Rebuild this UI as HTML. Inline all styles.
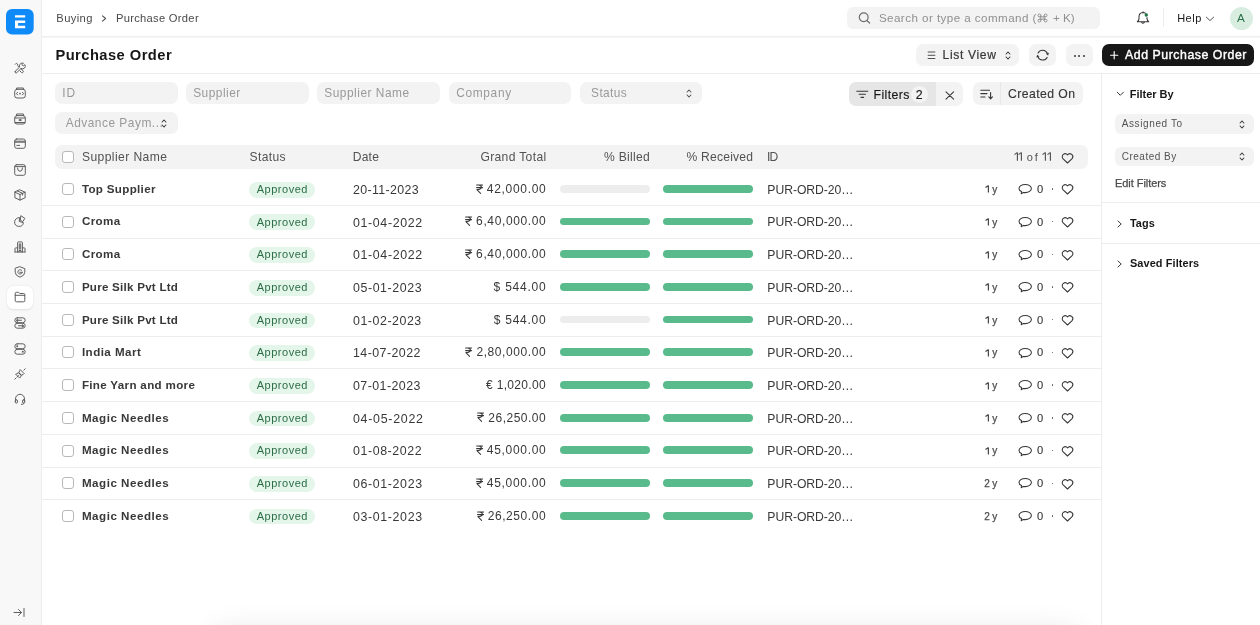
<!DOCTYPE html>
<html><head><meta charset="utf-8">
<style>
*{box-sizing:border-box;margin:0;padding:0}
html,body{width:1260px;height:625px;overflow:hidden;background:#fff;font-family:"Liberation Sans",sans-serif;color:#171717}
body{position:relative}
.a{position:absolute}
.t{position:absolute;white-space:nowrap;line-height:1}
svg.a{overflow:visible}
</style></head><body>
<div id="root" class="a" style="left:0;top:0;width:1260px;height:625px;overflow:hidden;will-change:transform">

<div class="a" style="left:0.00px;top:0.00px;width:41.00px;height:625.00px;background:#f8f8f8;border-radius:0px;"></div>
<div class="a" style="left:41.00px;top:0.00px;width:1.00px;height:625.00px;background:#ededed;border-radius:0px;"></div>
<svg class="a" style="left:6.00px;top:8.70px" width="27.7" height="25.5" viewBox="0 0 27.7 25.5" fill="none"><rect x="0" y="0" width="27.7" height="25.5" rx="6" fill="#0f8af9"/><path d="M9 6.2 H19.2 V8.4 H9 Z M9 11.5 H19.2 V13.9 H12.1 V16.8 H19.2 V19.2 H9 Z" fill="#fff"/></svg>
<div class="a" style="left:7.00px;top:285.80px;width:26.30px;height:23.00px;background:#fff;border-radius:6px;box-shadow:0 0.5px 2px rgba(0,0,0,0.10);"></div>
<svg class="a" style="left:14.00px;top:61.90px" width="12" height="12" viewBox="0 0 12 12" fill="none"><path d="M1.3 9.3 L5.6 5 A2.6 2.6 0 0 1 6.9 1.5 A2.7 2.7 0 0 1 9.4 1.2 L8 2.7 L9.3 4 L10.8 2.6 A2.7 2.7 0 0 1 7.1 6.4 L2.8 10.7 A1 1 0 0 1 1.3 9.3 Z" stroke="#5e5e5e" stroke-width="1.0" stroke-linecap="round" stroke-linejoin="round"/><path d="M1.3 2.3 L2.4 1.2 L3.6 2.2 L3.5 3.3 L5.2 5 M6.9 6.7 L9.2 9 A1.2 1.2 0 0 1 7.6 10.6 L6 9" stroke="#5e5e5e" stroke-width="1.0" stroke-linecap="round" stroke-linejoin="round"/></svg>
<svg class="a" style="left:14.00px;top:87.30px" width="12" height="12" viewBox="0 0 12 12" fill="none"><rect x="0.7" y="2.3" width="10.6" height="8.7" rx="2.3" stroke="#5e5e5e" stroke-width="1.0" stroke-linecap="round" stroke-linejoin="round"/><path d="M2.6 2.3 V1 H9.4 V2.3" stroke="#5e5e5e" stroke-width="1.0" stroke-linecap="round" stroke-linejoin="round"/><path d="M3.6 5.3 L2.4 6.6 L3.6 7.9 M8.4 5.3 L9.6 6.6 L8.4 7.9" stroke="#5e5e5e" stroke-width="1.0" stroke-linecap="round" stroke-linejoin="round"/><circle cx="6" cy="6.6" r="0.9" fill="#5e5e5e"/></svg>
<svg class="a" style="left:14.00px;top:113.10px" width="12" height="12" viewBox="0 0 12 12" fill="none"><rect x="0.7" y="2.6" width="10.6" height="8.4" rx="2.3" stroke="#5e5e5e" stroke-width="1.0" stroke-linecap="round" stroke-linejoin="round"/><path d="M2.6 2.6 V1 H9.4 V2.6 M0.9 5 H11.1 M0.9 9.5 H11.1" stroke="#5e5e5e" stroke-width="1.0" stroke-linecap="round" stroke-linejoin="round"/><ellipse cx="6" cy="7.1" rx="1.1" ry="0.65" stroke="#5e5e5e" stroke-width="1.0" stroke-linecap="round" stroke-linejoin="round"/></svg>
<svg class="a" style="left:14.00px;top:138.10px" width="12" height="12" viewBox="0 0 12 12" fill="none"><rect x="0.7" y="1" width="10.6" height="9.3" rx="2" stroke="#5e5e5e" stroke-width="1.0" stroke-linecap="round" stroke-linejoin="round"/><path d="M0.8 3.2 H11.2 M0.8 4.2 H11.2 M2.8 7.4 H5.6" stroke="#5e5e5e" stroke-width="1.0" stroke-linecap="round" stroke-linejoin="round"/></svg>
<svg class="a" style="left:14.00px;top:163.80px" width="12" height="12" viewBox="0 0 12 12" fill="none"><rect x="0.7" y="0.7" width="10.6" height="10.6" rx="1.8" stroke="#5e5e5e" stroke-width="1.0" stroke-linecap="round" stroke-linejoin="round"/><path d="M0.9 2.6 H11.1 M3.5 4 Q3.5 7.3 6 7.3 Q8.5 7.3 8.5 4" stroke="#5e5e5e" stroke-width="1.0" stroke-linecap="round" stroke-linejoin="round"/></svg>
<svg class="a" style="left:14.00px;top:189.00px" width="12" height="12" viewBox="0 0 12 12" fill="none"><path d="M6 0.9 L11.1 3.2 V8.8 L6 11.1 L0.9 8.8 V3.2 Z M0.9 3.2 L6 5.5 L11.1 3.2 M6 5.5 V11.1 M3.4 2 L8.6 4.3 V6" stroke="#5e5e5e" stroke-width="1.0" stroke-linecap="round" stroke-linejoin="round"/></svg>
<svg class="a" style="left:14.00px;top:214.70px" width="12" height="12" viewBox="0 0 12 12" fill="none"><path d="M5.2 2.6 A4.4 4.4 0 1 0 9.4 7.6 L5.6 6.6 Z" stroke="#5e5e5e" stroke-width="1.0" stroke-linecap="round" stroke-linejoin="round"/><path d="M7.2 0.9 L10.9 3.4 L8.7 6.6 L6.6 5.4 Z" stroke="#5e5e5e" stroke-width="1.0" stroke-linecap="round" stroke-linejoin="round"/></svg>
<svg class="a" style="left:14.00px;top:240.50px" width="12" height="12" viewBox="0 0 12 12" fill="none"><path d="M3.6 11 V1.6 Q3.6 0.9 4.3 0.9 H7.7 Q8.4 0.9 8.4 1.6 V11 M1 11 H11 M1 11 V7.6 Q1 6.9 1.7 6.9 H3.6 M11 11 V7.6 Q11 6.9 10.3 6.9 H8.4 M5.3 2.8 V8.2 M6.7 2.8 V8.2 M5 11 V9.5 H7 V11" stroke="#5e5e5e" stroke-width="1.0" stroke-linecap="round" stroke-linejoin="round"/></svg>
<svg class="a" style="left:14.00px;top:266.00px" width="12" height="12" viewBox="0 0 12 12" fill="none"><path d="M6 0.8 L10.8 2.6 V6.2 Q10.8 9.6 6 11.2 Q1.2 9.6 1.2 6.2 V2.6 Z" stroke="#5e5e5e" stroke-width="1.0" stroke-linecap="round" stroke-linejoin="round"/><path d="M7.9 4.6 A2.2 2.2 0 1 0 8.2 6.6 M8.2 6.3 L5.9 6.3" stroke="#5e5e5e" stroke-width="1.0" stroke-linecap="round" stroke-linejoin="round"/></svg>
<svg class="a" style="left:14.00px;top:291.30px" width="12" height="12" viewBox="0 0 12 12" fill="none"><path d="M1.2 2.5 Q1.2 1.3 2.3 1.3 H4.6 L5.8 2.5 H9.6 Q10.8 2.5 10.8 3.7 V9.6 Q10.8 10.8 9.6 10.8 H2.4 Q1.2 10.8 1.2 9.6 Z M1.2 4.3 H10.8" stroke="#5e5e5e" stroke-width="1.0" stroke-linecap="round" stroke-linejoin="round"/></svg>
<svg class="a" style="left:14.00px;top:316.80px" width="12" height="12" viewBox="0 0 12 12" fill="none"><rect x="0.8" y="0.8" width="10.4" height="4.9" rx="2.45" stroke="#5e5e5e" stroke-width="1.0" stroke-linecap="round" stroke-linejoin="round"/><rect x="0.8" y="6.3" width="10.4" height="4.9" rx="2.45" stroke="#5e5e5e" stroke-width="1.0" stroke-linecap="round" stroke-linejoin="round"/><path d="M2.4 3.25 L3.6 2.2 V4.3 Z M9.6 8.75 L8.4 7.7 V9.8 Z M4 3.25 H7.5 M4.5 8.75 H8" stroke="#5e5e5e" stroke-width="1.0" stroke-linecap="round" stroke-linejoin="round"/></svg>
<svg class="a" style="left:14.00px;top:343.00px" width="12" height="12" viewBox="0 0 12 12" fill="none"><rect x="0.8" y="0.8" width="10.4" height="4.9" rx="2.45" stroke="#5e5e5e" stroke-width="1.0" stroke-linecap="round" stroke-linejoin="round"/><rect x="0.8" y="6.3" width="10.4" height="4.9" rx="2.45" stroke="#5e5e5e" stroke-width="1.0" stroke-linecap="round" stroke-linejoin="round"/><circle cx="3.2" cy="3.25" r="1" fill="#5e5e5e"/><circle cx="8.8" cy="8.75" r="1" fill="#5e5e5e"/></svg>
<svg class="a" style="left:14.00px;top:367.60px" width="12" height="12" viewBox="0 0 12 12" fill="none"><path d="M0.8 11.2 L2.2 9.8 M11.2 0.8 L9.8 2.2 M1.9 6.4 L5.6 10.1 L6.3 9.4 A2.6 2.6 0 0 0 2.6 5.7 Z M6.4 1.9 L10.1 5.6 L9.4 6.3 A2.6 2.6 0 0 1 5.7 2.6 Z M3.2 8.8 L4.4 7.6" stroke="#5e5e5e" stroke-width="1.0" stroke-linecap="round" stroke-linejoin="round"/></svg>
<svg class="a" style="left:14.00px;top:393.20px" width="12" height="12" viewBox="0 0 12 12" fill="none"><path d="M1.5 8.2 V5.8 A4.5 4.5 0 0 1 10.5 5.8 V8.2" stroke="#5e5e5e" stroke-width="1.0" stroke-linecap="round" stroke-linejoin="round"/><rect x="1.2" y="6.8" width="2.3" height="3.3" rx="1.15" stroke="#5e5e5e" stroke-width="1.0" stroke-linecap="round" stroke-linejoin="round"/><rect x="8.5" y="6.8" width="2.3" height="3.3" rx="1.15" stroke="#5e5e5e" stroke-width="1.0" stroke-linecap="round" stroke-linejoin="round"/><path d="M9.6 10.1 V10.4 Q9.6 11.3 8.7 11.3 H7.4" stroke="#5e5e5e" stroke-width="1.0" stroke-linecap="round" stroke-linejoin="round"/></svg>
<svg class="a" style="left:13.00px;top:607.00px" width="12" height="11" viewBox="0 0 12 11" fill="none"><path d="M1 5.5 H8.5 M5.5 2.5 L8.5 5.5 L5.5 8.5 M11 1.5 V9.5" stroke="#5e5e5e" stroke-width="1.0" stroke-linecap="round" stroke-linejoin="round"/></svg>
<div class="a" style="left:42.00px;top:36.00px;width:1218.00px;height:1.00px;background:#efefef;border-radius:0px;"></div>
<div class="a" style="left:42.00px;top:37.00px;width:1218.00px;height:1.00px;background:#f7f7f7;border-radius:0px;"></div>
<div class="t" style="left:56.30px;top:13.00px;font-size:11.2px;color:#4a4a4a;letter-spacing:0.370px;">Buying</div>
<svg class="a" style="left:101.00px;top:15.00px" width="7" height="7" viewBox="0 0 7 7" fill="none"><path d="M1.5 0.8 L4.6 3.5 L1.5 6.2" stroke="#525252" stroke-width="1.1" stroke-linecap="round" stroke-linejoin="round"/></svg>
<div class="t" style="left:115.90px;top:13.00px;font-size:11.2px;color:#4a4a4a;letter-spacing:0.288px;">Purchase Order</div>
<div class="a" style="left:847.00px;top:7.00px;width:253.00px;height:22.00px;background:#f3f3f3;border-radius:6px;"></div>
<svg class="a" style="left:858.00px;top:12.00px" width="13" height="12" viewBox="0 0 13 12" fill="none"><circle cx="5.7" cy="5.3" r="4.4" stroke="#6b6b6b" stroke-width="1.2"/><path d="M8.9 8.5 L11.6 11" stroke="#6b6b6b" stroke-width="1.2" stroke-linecap="round"/></svg>
<div class="t" style="left:878.90px;top:12.00px;font-size:11.6px;color:#8f8f8f;letter-spacing:0.450px;">Search or type a command (</div>
<svg class="a" style="left:1038.30px;top:14.00px" width="9" height="8" viewBox="0 0 9 8" fill="none"><path d="M2.8 1.4 V6.6 M6.2 1.4 V6.6 M1.4 2.8 H7.6 M1.4 5.2 H7.6" stroke="#8f8f8f" stroke-width="0.95"/><circle cx="1.4" cy="1.4" r="1.4" stroke="#8f8f8f" stroke-width="0.95"/><circle cx="7.6" cy="1.4" r="1.4" stroke="#8f8f8f" stroke-width="0.95"/><circle cx="1.4" cy="6.6" r="1.4" stroke="#8f8f8f" stroke-width="0.95"/><circle cx="7.6" cy="6.6" r="1.4" stroke="#8f8f8f" stroke-width="0.95"/></svg>
<div class="t" style="left:1053.00px;top:12.00px;font-size:11.6px;color:#8f8f8f;">+ K)</div>
<svg class="a" style="left:1136.00px;top:11.00px" width="14" height="15" viewBox="0 0 14 15" fill="none"><path d="M9.6 2.3 Q8.6 1.4 7 1.4 Q3 1.6 3 5.8 V7.6 Q2.9 9.6 1.3 10.7 H12.7 Q11.1 9.6 11 7.6 V6.4" stroke="#383838" stroke-width="1.05" stroke-linejoin="round" stroke-linecap="round"/><path d="M5.7 11.4 Q7 13.2 8.3 11.4" stroke="#383838" stroke-width="1.05" stroke-linecap="round"/><path d="M7 1.4 V0.7" stroke="#383838" stroke-width="1.05" stroke-linecap="round"/><circle cx="10.3" cy="4" r="1.7" fill="#1f7a48"/></svg>
<div class="a" style="left:1163.00px;top:8.20px;width:1.00px;height:18.90px;background:#ededed;border-radius:0px;"></div>
<div class="t" style="left:1177.20px;top:13.00px;font-size:11px;color:#171717;letter-spacing:0.491px;">Help</div>
<svg class="a" style="left:1205.00px;top:16.00px" width="10" height="6" viewBox="0 0 10 6" fill="none"><path d="M1.4 1.2 L5 4.6 L8.6 1.2" stroke="#525252" stroke-width="1" stroke-linecap="round" stroke-linejoin="round"/></svg>
<div class="a" style="left:1229.50px;top:6.50px;width:23.00px;height:23.00px;background:#d8ede0;border-radius:12px;"></div>
<div class="t" style="left:1236.90px;top:12.00px;font-size:11.7px;color:#2a7048;">A</div>
<div class="a" style="left:42.00px;top:73.00px;width:1059.00px;height:1.00px;background:#ededed;border-radius:0px;"></div>
<div class="a" style="left:1101.00px;top:73.00px;width:159.00px;height:1.00px;background:#ededed;border-radius:0px;"></div>
<div class="t" style="left:55.40px;top:48.00px;font-size:14.7px;color:#171717;font-weight:bold;letter-spacing:0.462px;">Purchase Order</div>
<div class="a" style="left:916.00px;top:44.00px;width:103.00px;height:22.00px;background:#f3f3f3;border-radius:7px;"></div>
<svg class="a" style="left:927.00px;top:51.00px" width="9" height="8" viewBox="0 0 9 8" fill="none"><path d="M0.7 1 H8.3 M0.7 4.3 H8.3 M0.7 7.5 H8.3" stroke="#525252" stroke-width="1"/></svg>
<div class="t" style="left:942.50px;top:49.00px;font-size:12.1px;color:#383838;letter-spacing:0.659px;-webkit-text-stroke:0.2px #383838;">List View</div>
<svg class="a" style="left:1005.00px;top:51.00px" width="6" height="9" viewBox="0 0 6 9" fill="none"><path d="M1.1 3 L3 1 L4.9 3 M1.1 6 L3 8 L4.9 6" stroke="#383838" stroke-width="1.05" stroke-linecap="round" stroke-linejoin="round"/></svg>
<div class="a" style="left:1029.00px;top:44.00px;width:27.00px;height:22.00px;background:#f3f3f3;border-radius:7px;"></div>
<svg class="a" style="left:1035.00px;top:48.00px" width="15" height="14" viewBox="0 0 15 14" fill="none"><path d="M3.1 4.9 A5 4.6 0 0 1 12.3 5.3" stroke="#383838" stroke-width="1.15" stroke-linecap="round"/><path d="M10.8 5.7 L14 4.7 L13.1 7.5 Z" fill="#383838"/><path d="M12.1 9.4 A5 4.6 0 0 1 2.9 8.9" stroke="#383838" stroke-width="1.15" stroke-linecap="round"/><path d="M4.5 8.5 L1.3 9.5 L2.2 6.7 Z" fill="#383838"/></svg>
<div class="a" style="left:1065.50px;top:44.00px;width:27.50px;height:22.00px;background:#f3f3f3;border-radius:7px;"></div>
<div class="a" style="left:1074.00px;top:54.50px;width:2.00px;height:2.00px;background:#383838;border-radius:1px;"></div>
<div class="a" style="left:1078.30px;top:54.50px;width:2.00px;height:2.00px;background:#383838;border-radius:1px;"></div>
<div class="a" style="left:1082.50px;top:54.50px;width:2.00px;height:2.00px;background:#383838;border-radius:1px;"></div>
<div class="a" style="left:1102.00px;top:44.00px;width:152.00px;height:22.40px;background:#171717;border-radius:7px;"></div>
<svg class="a" style="left:1110.00px;top:50.80px" width="9" height="9" viewBox="0 0 9 9" fill="none"><path d="M4.2 0.6 V7.8 M0.6 4.2 H7.8" stroke="#fff" stroke-width="1.15" stroke-linecap="round"/></svg>
<div class="t" style="left:1125.10px;top:49.00px;font-size:12.3px;color:#fff;letter-spacing:0.545px;-webkit-text-stroke:0.4px #fff;">Add Purchase Order</div>
<div class="a" style="left:1101.00px;top:74.00px;width:1.00px;height:551.00px;background:#ededed;border-radius:0px;"></div>
<div class="a" style="left:55.00px;top:82.00px;width:123.00px;height:22.00px;background:#f3f3f3;border-radius:7px;"></div>
<div class="t" style="left:62.20px;top:88.00px;font-size:11.9px;color:#999;letter-spacing:0.950px;">ID</div>
<div class="a" style="left:186.00px;top:82.00px;width:123.00px;height:22.00px;background:#f3f3f3;border-radius:7px;"></div>
<div class="t" style="left:193.20px;top:88.00px;font-size:11.9px;color:#999;letter-spacing:0.498px;">Supplier</div>
<div class="a" style="left:317.00px;top:82.00px;width:123.00px;height:22.00px;background:#f3f3f3;border-radius:7px;"></div>
<div class="t" style="left:324.20px;top:88.00px;font-size:11.9px;color:#999;letter-spacing:0.524px;">Supplier Name</div>
<div class="a" style="left:449.00px;top:82.00px;width:122.00px;height:22.00px;background:#f3f3f3;border-radius:7px;"></div>
<div class="t" style="left:456.20px;top:88.00px;font-size:11.9px;color:#999;letter-spacing:0.678px;">Company</div>
<div class="a" style="left:580.00px;top:82.00px;width:122.00px;height:22.00px;background:#f3f3f3;border-radius:7px;"></div>
<div class="t" style="left:591.10px;top:88.00px;font-size:11.9px;color:#999;letter-spacing:0.373px;">Status</div>
<svg class="a" style="left:686.00px;top:89.00px" width="6" height="9" viewBox="0 0 6 9" fill="none"><path d="M1.1 3 L3 1 L4.9 3 M1.1 6 L3 8 L4.9 6" stroke="#525252" stroke-width="1.05" stroke-linecap="round" stroke-linejoin="round"/></svg>
<div class="a" style="left:55.00px;top:112.00px;width:123.00px;height:22.00px;background:#f3f3f3;border-radius:7px;"></div>
<div class="t" style="left:65.70px;top:118.00px;font-size:11.9px;color:#999;letter-spacing:0.513px;">Advance Paym...</div>
<svg class="a" style="left:160.50px;top:119.00px" width="6" height="9" viewBox="0 0 6 9" fill="none"><path d="M1.1 3 L3 1 L4.9 3 M1.1 6 L3 8 L4.9 6" stroke="#383838" stroke-width="1.05" stroke-linecap="round" stroke-linejoin="round"/></svg>
<div class="a" style="left:849.00px;top:82.00px;width:114.00px;height:23.50px;background:#f3f3f3;border-radius:7px;"></div>
<div class="a" style="left:849.00px;top:82.00px;width:86.60px;height:23.50px;background:#e6e6e6;border-radius:0px;border-radius:7px 0 0 7px;"></div>
<svg class="a" style="left:856.00px;top:90.00px" width="13" height="9" viewBox="0 0 13 9" fill="none"><path d="M0.8 1.2 H11.8 M3.2 4.3 H9.4 M5 7.4 H7.6" stroke="#383838" stroke-width="1.1" stroke-linecap="round"/></svg>
<div class="t" style="left:873.50px;top:89.00px;font-size:12.3px;color:#171717;letter-spacing:0.403px;-webkit-text-stroke:0.15px #171717;">Filters</div>
<div class="a" style="left:911.30px;top:86.00px;width:17.20px;height:17.20px;background:#f3f3f3;border-radius:9px;"></div>
<div class="t" style="left:915.80px;top:89.00px;font-size:12.3px;color:#171717;-webkit-text-stroke:0.15px #171717;">2</div>
<svg class="a" style="left:945.00px;top:91.00px" width="10" height="9" viewBox="0 0 10 9" fill="none"><path d="M1 0.8 L8.6 8.2 M8.6 0.8 L1 8.2" stroke="#383838" stroke-width="1.05" stroke-linecap="round"/></svg>
<div class="a" style="left:972.80px;top:82.00px;width:110.40px;height:23.20px;background:#f3f3f3;border-radius:7px;"></div>
<div class="a" style="left:1000.00px;top:82.00px;width:1.00px;height:23.20px;background:#e8e8e8;border-radius:0px;"></div>
<svg class="a" style="left:980.00px;top:89.00px" width="14" height="11" viewBox="0 0 14 11" fill="none"><path d="M0.8 1.2 H9.5 M0.8 4.6 H7 M0.8 8 H5" stroke="#383838" stroke-width="1.1" stroke-linecap="round"/><path d="M10.6 3.6 V9.6 M8.8 7.8 L10.6 9.8 L12.4 7.8" stroke="#383838" stroke-width="1.1" stroke-linecap="round" stroke-linejoin="round"/></svg>
<div class="t" style="left:1008.00px;top:88.00px;font-size:12.2px;color:#383838;letter-spacing:0.449px;-webkit-text-stroke:0.15px #383838;">Created On</div>
<div class="a" style="left:55.00px;top:145.00px;width:1033.00px;height:24.00px;background:#f3f3f3;border-radius:7px;"></div>
<div class="a" style="left:62.00px;top:151.40px;width:12.00px;height:12.00px;background:#fff;border-radius:3px;border:1px solid #b8b8b8;"></div>
<div class="t" style="left:81.90px;top:151.00px;font-size:12.1px;color:#525252;letter-spacing:0.423px;">Supplier Name</div>
<div class="t" style="left:249.50px;top:151.00px;font-size:12.1px;color:#525252;letter-spacing:0.359px;">Status</div>
<div class="t" style="left:352.70px;top:151.00px;font-size:12.1px;color:#525252;letter-spacing:0.215px;">Date</div>
<div class="t" style="left:480.40px;top:151.00px;font-size:12.1px;color:#525252;letter-spacing:0.347px;">Grand Total</div>
<div class="t" style="left:604.10px;top:151.00px;font-size:12.1px;color:#525252;letter-spacing:0.283px;">% Billed</div>
<div class="t" style="left:686.40px;top:151.00px;font-size:12.1px;color:#525252;letter-spacing:0.237px;">% Received</div>
<div class="t" style="left:766.90px;top:151.00px;font-size:12.1px;color:#525252;letter-spacing:-0.700px;">ID</div>
<svg class="a" style="left:1013.50px;top:152.30px" width="4.5" height="9.199999999999989" viewBox="0 0 4.5 9.199999999999989" fill="none"><path d="M0.5 2.6 L2.8 0.9 H3.4 V8.70" stroke="#525252" stroke-width="1.15" stroke-linejoin="round"/></svg>
<svg class="a" style="left:1018.30px;top:152.30px" width="4.5" height="9.199999999999989" viewBox="0 0 4.5 9.199999999999989" fill="none"><path d="M0.5 2.6 L2.8 0.9 H3.4 V8.70" stroke="#525252" stroke-width="1.15" stroke-linejoin="round"/></svg>
<div class="t" style="left:1026.80px;top:152.00px;font-size:11px;color:#525252;letter-spacing:1.804px;">of</div>
<svg class="a" style="left:1042.10px;top:152.30px" width="4.5" height="9.199999999999989" viewBox="0 0 4.5 9.199999999999989" fill="none"><path d="M0.5 2.6 L2.8 0.9 H3.4 V8.70" stroke="#525252" stroke-width="1.15" stroke-linejoin="round"/></svg>
<svg class="a" style="left:1046.90px;top:152.30px" width="4.5" height="9.199999999999989" viewBox="0 0 4.5 9.199999999999989" fill="none"><path d="M0.5 2.6 L2.8 0.9 H3.4 V8.70" stroke="#525252" stroke-width="1.15" stroke-linejoin="round"/></svg>
<svg class="a" style="left:1061.20px;top:152.50px" width="13" height="11" viewBox="0 0 13 11" fill="none"><path d="M6.5 10 L1.9 5.6 A2.7 2.7 0 0 1 6.5 1.9 A2.7 2.7 0 0 1 11.1 5.6 Z" stroke="#383838" stroke-width="1.05" stroke-linejoin="round"/></svg>
<div class="a" style="left:62.00px;top:183.00px;width:12.00px;height:12.00px;background:#fff;border-radius:3px;border:1px solid #b8b8b8;"></div>
<div class="t" style="left:81.90px;top:183.00px;font-size:11.6px;color:#383838;font-weight:bold;letter-spacing:0.325px;">Top Supplier</div>
<div class="a" style="left:249.00px;top:181.80px;width:65.80px;height:15.80px;background:#e4f5e9;border-radius:8px;"></div>
<div class="t" style="left:256.70px;top:184.00px;font-size:11px;color:#2b6d47;letter-spacing:0.530px;">Approved</div>
<div class="t" style="left:353.00px;top:184.00px;font-size:12.4px;color:#383838;letter-spacing:0.355px;">20-11-2023</div>
<div class="t" style="left:486.80px;top:183.00px;font-size:12px;color:#383838;letter-spacing:0.689px;">42,000.00</div>
<svg class="a" style="left:475.80px;top:183.60px" width="8" height="10" viewBox="0 0 8 10" fill="none"><path d="M0.6 1 H6.6 M0.6 3.6 H6.6 M2.4 1 Q5.4 1 5.4 3.2 Q5.4 5.4 0.9 5.6 L4.6 9.4" stroke="#383838" stroke-width="1.05" stroke-linejoin="round" stroke-linecap="round"/></svg>
<div class="a" style="left:560.10px;top:184.90px;width:89.90px;height:7.80px;background:#ededed;border-radius:4px;"></div>
<div class="a" style="left:663.10px;top:184.90px;width:90.30px;height:7.80px;background:#59ba8b;border-radius:4px;"></div>
<div class="t" style="left:767.30px;top:184.00px;font-size:12.2px;color:#383838;letter-spacing:-0.047px;">PUR-ORD-20…</div>
<svg class="a" style="left:984.50px;top:185.40px" width="4.5" height="8.0" viewBox="0 0 4.5 8.0" fill="none"><path d="M0.5 2.6 L2.8 0.9 H3.4 V7.50" stroke="#4a4a4a" stroke-width="1.25" stroke-linejoin="round"/></svg>
<div class="t" style="left:992.20px;top:185.00px;font-size:10px;color:#4a4a4a;-webkit-text-stroke:0.25px #4a4a4a;">y</div>
<svg class="a" style="left:1017.50px;top:183.20px" width="15" height="12" viewBox="0 0 15 12" fill="none"><path d="M3.2 10.8 L3.6 8.6 C1.9 7.9 1 6.8 1 5.5 C1 3.2 3.7 1.4 7.2 1.4 C10.6 1.4 13.4 3.2 13.4 5.5 C13.4 7.8 10.6 9.6 7.2 9.6 C6.5 9.6 5.9 9.6 5.3 9.4 Z" stroke="#383838" stroke-width="1.05" stroke-linejoin="round"/></svg>
<div class="t" style="left:1037.00px;top:184.00px;font-size:11.2px;color:#383838;-webkit-text-stroke:0.12px #383838;">0</div>
<div class="a" style="left:1051.60px;top:188.30px;width:1.40px;height:1.40px;background:#525252;border-radius:1px;"></div>
<svg class="a" style="left:1061.30px;top:184.40px" width="13" height="11" viewBox="0 0 13 11" fill="none"><path d="M6.5 10 L1.9 5.6 A2.7 2.7 0 0 1 6.5 1.9 A2.7 2.7 0 0 1 11.1 5.6 Z" stroke="#383838" stroke-width="1.05" stroke-linejoin="round"/></svg>
<div class="a" style="left:42.00px;top:205.00px;width:1059.00px;height:1.00px;background:#ededed;border-radius:0px;"></div>
<div class="a" style="left:62.00px;top:215.69px;width:12.00px;height:12.00px;background:#fff;border-radius:3px;border:1px solid #b8b8b8;"></div>
<div class="t" style="left:81.90px;top:215.00px;font-size:11.6px;color:#383838;font-weight:bold;letter-spacing:0.395px;">Croma</div>
<div class="a" style="left:249.00px;top:214.49px;width:65.80px;height:15.80px;background:#e4f5e9;border-radius:8px;"></div>
<div class="t" style="left:256.70px;top:217.00px;font-size:11px;color:#2b6d47;letter-spacing:0.530px;">Approved</div>
<div class="t" style="left:353.00px;top:217.00px;font-size:12.4px;color:#383838;letter-spacing:0.642px;">01-04-2022</div>
<div class="t" style="left:476.10px;top:215.00px;font-size:12px;color:#383838;letter-spacing:0.620px;">6,40,000.00</div>
<svg class="a" style="left:465.10px;top:216.29px" width="8" height="10" viewBox="0 0 8 10" fill="none"><path d="M0.6 1 H6.6 M0.6 3.6 H6.6 M2.4 1 Q5.4 1 5.4 3.2 Q5.4 5.4 0.9 5.6 L4.6 9.4" stroke="#383838" stroke-width="1.05" stroke-linejoin="round" stroke-linecap="round"/></svg>
<div class="a" style="left:560.10px;top:217.59px;width:89.90px;height:7.80px;background:#59ba8b;border-radius:4px;"></div>
<div class="a" style="left:663.10px;top:217.59px;width:90.30px;height:7.80px;background:#59ba8b;border-radius:4px;"></div>
<div class="t" style="left:767.30px;top:216.00px;font-size:12.2px;color:#383838;letter-spacing:-0.047px;">PUR-ORD-20…</div>
<svg class="a" style="left:984.50px;top:218.09px" width="4.5" height="8.0" viewBox="0 0 4.5 8.0" fill="none"><path d="M0.5 2.6 L2.8 0.9 H3.4 V7.50" stroke="#4a4a4a" stroke-width="1.25" stroke-linejoin="round"/></svg>
<div class="t" style="left:992.20px;top:218.00px;font-size:10px;color:#4a4a4a;-webkit-text-stroke:0.25px #4a4a4a;">y</div>
<svg class="a" style="left:1017.50px;top:215.89px" width="15" height="12" viewBox="0 0 15 12" fill="none"><path d="M3.2 10.8 L3.6 8.6 C1.9 7.9 1 6.8 1 5.5 C1 3.2 3.7 1.4 7.2 1.4 C10.6 1.4 13.4 3.2 13.4 5.5 C13.4 7.8 10.6 9.6 7.2 9.6 C6.5 9.6 5.9 9.6 5.3 9.4 Z" stroke="#383838" stroke-width="1.05" stroke-linejoin="round"/></svg>
<div class="t" style="left:1037.00px;top:217.00px;font-size:11.2px;color:#383838;-webkit-text-stroke:0.12px #383838;">0</div>
<div class="a" style="left:1051.60px;top:220.99px;width:1.40px;height:1.40px;background:#525252;border-radius:1px;"></div>
<svg class="a" style="left:1061.30px;top:217.09px" width="13" height="11" viewBox="0 0 13 11" fill="none"><path d="M6.5 10 L1.9 5.6 A2.7 2.7 0 0 1 6.5 1.9 A2.7 2.7 0 0 1 11.1 5.6 Z" stroke="#383838" stroke-width="1.05" stroke-linejoin="round"/></svg>
<div class="a" style="left:42.00px;top:237.69px;width:1059.00px;height:1.00px;background:#ededed;border-radius:0px;"></div>
<div class="a" style="left:62.00px;top:248.38px;width:12.00px;height:12.00px;background:#fff;border-radius:3px;border:1px solid #b8b8b8;"></div>
<div class="t" style="left:81.90px;top:248.00px;font-size:11.6px;color:#383838;font-weight:bold;letter-spacing:0.395px;">Croma</div>
<div class="a" style="left:249.00px;top:247.18px;width:65.80px;height:15.80px;background:#e4f5e9;border-radius:8px;"></div>
<div class="t" style="left:256.70px;top:249.00px;font-size:11px;color:#2b6d47;letter-spacing:0.530px;">Approved</div>
<div class="t" style="left:353.00px;top:249.00px;font-size:12.4px;color:#383838;letter-spacing:0.642px;">01-04-2022</div>
<div class="t" style="left:476.10px;top:248.00px;font-size:12px;color:#383838;letter-spacing:0.620px;">6,40,000.00</div>
<svg class="a" style="left:465.10px;top:248.98px" width="8" height="10" viewBox="0 0 8 10" fill="none"><path d="M0.6 1 H6.6 M0.6 3.6 H6.6 M2.4 1 Q5.4 1 5.4 3.2 Q5.4 5.4 0.9 5.6 L4.6 9.4" stroke="#383838" stroke-width="1.05" stroke-linejoin="round" stroke-linecap="round"/></svg>
<div class="a" style="left:560.10px;top:250.28px;width:89.90px;height:7.80px;background:#59ba8b;border-radius:4px;"></div>
<div class="a" style="left:663.10px;top:250.28px;width:90.30px;height:7.80px;background:#59ba8b;border-radius:4px;"></div>
<div class="t" style="left:767.30px;top:249.00px;font-size:12.2px;color:#383838;letter-spacing:-0.047px;">PUR-ORD-20…</div>
<svg class="a" style="left:984.50px;top:250.78px" width="4.5" height="7.999999999999972" viewBox="0 0 4.5 7.999999999999972" fill="none"><path d="M0.5 2.6 L2.8 0.9 H3.4 V7.50" stroke="#4a4a4a" stroke-width="1.25" stroke-linejoin="round"/></svg>
<div class="t" style="left:992.20px;top:250.00px;font-size:10px;color:#4a4a4a;-webkit-text-stroke:0.25px #4a4a4a;">y</div>
<svg class="a" style="left:1017.50px;top:248.58px" width="15" height="12" viewBox="0 0 15 12" fill="none"><path d="M3.2 10.8 L3.6 8.6 C1.9 7.9 1 6.8 1 5.5 C1 3.2 3.7 1.4 7.2 1.4 C10.6 1.4 13.4 3.2 13.4 5.5 C13.4 7.8 10.6 9.6 7.2 9.6 C6.5 9.6 5.9 9.6 5.3 9.4 Z" stroke="#383838" stroke-width="1.05" stroke-linejoin="round"/></svg>
<div class="t" style="left:1037.00px;top:249.00px;font-size:11.2px;color:#383838;-webkit-text-stroke:0.12px #383838;">0</div>
<div class="a" style="left:1051.60px;top:253.68px;width:1.40px;height:1.40px;background:#525252;border-radius:1px;"></div>
<svg class="a" style="left:1061.30px;top:249.78px" width="13" height="11" viewBox="0 0 13 11" fill="none"><path d="M6.5 10 L1.9 5.6 A2.7 2.7 0 0 1 6.5 1.9 A2.7 2.7 0 0 1 11.1 5.6 Z" stroke="#383838" stroke-width="1.05" stroke-linejoin="round"/></svg>
<div class="a" style="left:42.00px;top:270.38px;width:1059.00px;height:1.00px;background:#ededed;border-radius:0px;"></div>
<div class="a" style="left:62.00px;top:281.07px;width:12.00px;height:12.00px;background:#fff;border-radius:3px;border:1px solid #b8b8b8;"></div>
<div class="t" style="left:81.90px;top:281.00px;font-size:11.6px;color:#383838;font-weight:bold;letter-spacing:0.245px;">Pure Silk Pvt Ltd</div>
<div class="a" style="left:249.00px;top:279.87px;width:65.80px;height:15.80px;background:#e4f5e9;border-radius:8px;"></div>
<div class="t" style="left:256.70px;top:282.00px;font-size:11px;color:#2b6d47;letter-spacing:0.530px;">Approved</div>
<div class="t" style="left:353.00px;top:282.00px;font-size:12.4px;color:#383838;letter-spacing:0.575px;">05-01-2023</div>
<div class="t" style="left:493.60px;top:281.00px;font-size:12px;color:#383838;letter-spacing:0.769px;">$ 544.00</div>
<div class="a" style="left:560.10px;top:282.97px;width:89.90px;height:7.80px;background:#59ba8b;border-radius:4px;"></div>
<div class="a" style="left:663.10px;top:282.97px;width:90.30px;height:7.80px;background:#59ba8b;border-radius:4px;"></div>
<div class="t" style="left:767.30px;top:282.00px;font-size:12.2px;color:#383838;letter-spacing:-0.047px;">PUR-ORD-20…</div>
<svg class="a" style="left:984.50px;top:283.47px" width="4.5" height="8.0" viewBox="0 0 4.5 8.0" fill="none"><path d="M0.5 2.6 L2.8 0.9 H3.4 V7.50" stroke="#4a4a4a" stroke-width="1.25" stroke-linejoin="round"/></svg>
<div class="t" style="left:992.20px;top:283.00px;font-size:10px;color:#4a4a4a;-webkit-text-stroke:0.25px #4a4a4a;">y</div>
<svg class="a" style="left:1017.50px;top:281.27px" width="15" height="12" viewBox="0 0 15 12" fill="none"><path d="M3.2 10.8 L3.6 8.6 C1.9 7.9 1 6.8 1 5.5 C1 3.2 3.7 1.4 7.2 1.4 C10.6 1.4 13.4 3.2 13.4 5.5 C13.4 7.8 10.6 9.6 7.2 9.6 C6.5 9.6 5.9 9.6 5.3 9.4 Z" stroke="#383838" stroke-width="1.05" stroke-linejoin="round"/></svg>
<div class="t" style="left:1037.00px;top:282.00px;font-size:11.2px;color:#383838;-webkit-text-stroke:0.12px #383838;">0</div>
<div class="a" style="left:1051.60px;top:286.37px;width:1.40px;height:1.40px;background:#525252;border-radius:1px;"></div>
<svg class="a" style="left:1061.30px;top:282.47px" width="13" height="11" viewBox="0 0 13 11" fill="none"><path d="M6.5 10 L1.9 5.6 A2.7 2.7 0 0 1 6.5 1.9 A2.7 2.7 0 0 1 11.1 5.6 Z" stroke="#383838" stroke-width="1.05" stroke-linejoin="round"/></svg>
<div class="a" style="left:42.00px;top:303.07px;width:1059.00px;height:1.00px;background:#ededed;border-radius:0px;"></div>
<div class="a" style="left:62.00px;top:313.76px;width:12.00px;height:12.00px;background:#fff;border-radius:3px;border:1px solid #b8b8b8;"></div>
<div class="t" style="left:81.90px;top:314.00px;font-size:11.6px;color:#383838;font-weight:bold;letter-spacing:0.245px;">Pure Silk Pvt Ltd</div>
<div class="a" style="left:249.00px;top:312.56px;width:65.80px;height:15.80px;background:#e4f5e9;border-radius:8px;"></div>
<div class="t" style="left:256.70px;top:315.00px;font-size:11px;color:#2b6d47;letter-spacing:0.530px;">Approved</div>
<div class="t" style="left:353.00px;top:315.00px;font-size:12.4px;color:#383838;letter-spacing:0.542px;">01-02-2023</div>
<div class="t" style="left:493.70px;top:314.00px;font-size:12px;color:#383838;letter-spacing:0.755px;">$ 544.00</div>
<div class="a" style="left:560.10px;top:315.66px;width:89.90px;height:7.80px;background:#ededed;border-radius:4px;"></div>
<div class="a" style="left:663.10px;top:315.66px;width:90.30px;height:7.80px;background:#59ba8b;border-radius:4px;"></div>
<div class="t" style="left:767.30px;top:315.00px;font-size:12.2px;color:#383838;letter-spacing:-0.047px;">PUR-ORD-20…</div>
<svg class="a" style="left:984.50px;top:316.16px" width="4.5" height="8.0" viewBox="0 0 4.5 8.0" fill="none"><path d="M0.5 2.6 L2.8 0.9 H3.4 V7.50" stroke="#4a4a4a" stroke-width="1.25" stroke-linejoin="round"/></svg>
<div class="t" style="left:992.20px;top:316.00px;font-size:10px;color:#4a4a4a;-webkit-text-stroke:0.25px #4a4a4a;">y</div>
<svg class="a" style="left:1017.50px;top:313.96px" width="15" height="12" viewBox="0 0 15 12" fill="none"><path d="M3.2 10.8 L3.6 8.6 C1.9 7.9 1 6.8 1 5.5 C1 3.2 3.7 1.4 7.2 1.4 C10.6 1.4 13.4 3.2 13.4 5.5 C13.4 7.8 10.6 9.6 7.2 9.6 C6.5 9.6 5.9 9.6 5.3 9.4 Z" stroke="#383838" stroke-width="1.05" stroke-linejoin="round"/></svg>
<div class="t" style="left:1037.00px;top:315.00px;font-size:11.2px;color:#383838;-webkit-text-stroke:0.12px #383838;">0</div>
<div class="a" style="left:1051.60px;top:319.06px;width:1.40px;height:1.40px;background:#525252;border-radius:1px;"></div>
<svg class="a" style="left:1061.30px;top:315.16px" width="13" height="11" viewBox="0 0 13 11" fill="none"><path d="M6.5 10 L1.9 5.6 A2.7 2.7 0 0 1 6.5 1.9 A2.7 2.7 0 0 1 11.1 5.6 Z" stroke="#383838" stroke-width="1.05" stroke-linejoin="round"/></svg>
<div class="a" style="left:42.00px;top:335.76px;width:1059.00px;height:1.00px;background:#ededed;border-radius:0px;"></div>
<div class="a" style="left:62.00px;top:346.45px;width:12.00px;height:12.00px;background:#fff;border-radius:3px;border:1px solid #b8b8b8;"></div>
<div class="t" style="left:81.90px;top:346.00px;font-size:11.6px;color:#383838;font-weight:bold;letter-spacing:0.468px;">India Mart</div>
<div class="a" style="left:249.00px;top:345.25px;width:65.80px;height:15.80px;background:#e4f5e9;border-radius:8px;"></div>
<div class="t" style="left:256.70px;top:347.00px;font-size:11px;color:#2b6d47;letter-spacing:0.530px;">Approved</div>
<div class="t" style="left:353.00px;top:347.00px;font-size:12.4px;color:#383838;letter-spacing:0.442px;">14-07-2022</div>
<div class="t" style="left:476.40px;top:346.00px;font-size:12px;color:#383838;letter-spacing:0.590px;">2,80,000.00</div>
<svg class="a" style="left:465.40px;top:347.05px" width="8" height="10" viewBox="0 0 8 10" fill="none"><path d="M0.6 1 H6.6 M0.6 3.6 H6.6 M2.4 1 Q5.4 1 5.4 3.2 Q5.4 5.4 0.9 5.6 L4.6 9.4" stroke="#383838" stroke-width="1.05" stroke-linejoin="round" stroke-linecap="round"/></svg>
<div class="a" style="left:560.10px;top:348.35px;width:89.90px;height:7.80px;background:#59ba8b;border-radius:4px;"></div>
<div class="a" style="left:663.10px;top:348.35px;width:90.30px;height:7.80px;background:#59ba8b;border-radius:4px;"></div>
<div class="t" style="left:767.30px;top:347.00px;font-size:12.2px;color:#383838;letter-spacing:-0.047px;">PUR-ORD-20…</div>
<svg class="a" style="left:984.50px;top:348.85px" width="4.5" height="8.0" viewBox="0 0 4.5 8.0" fill="none"><path d="M0.5 2.6 L2.8 0.9 H3.4 V7.50" stroke="#4a4a4a" stroke-width="1.25" stroke-linejoin="round"/></svg>
<div class="t" style="left:992.20px;top:348.00px;font-size:10px;color:#4a4a4a;-webkit-text-stroke:0.25px #4a4a4a;">y</div>
<svg class="a" style="left:1017.50px;top:346.65px" width="15" height="12" viewBox="0 0 15 12" fill="none"><path d="M3.2 10.8 L3.6 8.6 C1.9 7.9 1 6.8 1 5.5 C1 3.2 3.7 1.4 7.2 1.4 C10.6 1.4 13.4 3.2 13.4 5.5 C13.4 7.8 10.6 9.6 7.2 9.6 C6.5 9.6 5.9 9.6 5.3 9.4 Z" stroke="#383838" stroke-width="1.05" stroke-linejoin="round"/></svg>
<div class="t" style="left:1037.00px;top:347.00px;font-size:11.2px;color:#383838;-webkit-text-stroke:0.12px #383838;">0</div>
<div class="a" style="left:1051.60px;top:351.75px;width:1.40px;height:1.40px;background:#525252;border-radius:1px;"></div>
<svg class="a" style="left:1061.30px;top:347.85px" width="13" height="11" viewBox="0 0 13 11" fill="none"><path d="M6.5 10 L1.9 5.6 A2.7 2.7 0 0 1 6.5 1.9 A2.7 2.7 0 0 1 11.1 5.6 Z" stroke="#383838" stroke-width="1.05" stroke-linejoin="round"/></svg>
<div class="a" style="left:42.00px;top:368.45px;width:1059.00px;height:1.00px;background:#ededed;border-radius:0px;"></div>
<div class="a" style="left:62.00px;top:379.14px;width:12.00px;height:12.00px;background:#fff;border-radius:3px;border:1px solid #b8b8b8;"></div>
<div class="t" style="left:81.90px;top:379.00px;font-size:11.6px;color:#383838;font-weight:bold;letter-spacing:0.327px;">Fine Yarn and more</div>
<div class="a" style="left:249.00px;top:377.94px;width:65.80px;height:15.80px;background:#e4f5e9;border-radius:8px;"></div>
<div class="t" style="left:256.70px;top:380.00px;font-size:11px;color:#2b6d47;letter-spacing:0.530px;">Approved</div>
<div class="t" style="left:353.00px;top:380.00px;font-size:12.4px;color:#383838;letter-spacing:0.442px;">07-01-2023</div>
<div class="t" style="left:486.00px;top:379.00px;font-size:12px;color:#383838;letter-spacing:0.331px;">€ 1,020.00</div>
<div class="a" style="left:560.10px;top:381.04px;width:89.90px;height:7.80px;background:#59ba8b;border-radius:4px;"></div>
<div class="a" style="left:663.10px;top:381.04px;width:90.30px;height:7.80px;background:#59ba8b;border-radius:4px;"></div>
<div class="t" style="left:767.30px;top:380.00px;font-size:12.2px;color:#383838;letter-spacing:-0.047px;">PUR-ORD-20…</div>
<svg class="a" style="left:984.50px;top:381.54px" width="4.5" height="8.0" viewBox="0 0 4.5 8.0" fill="none"><path d="M0.5 2.6 L2.8 0.9 H3.4 V7.50" stroke="#4a4a4a" stroke-width="1.25" stroke-linejoin="round"/></svg>
<div class="t" style="left:992.20px;top:381.00px;font-size:10px;color:#4a4a4a;-webkit-text-stroke:0.25px #4a4a4a;">y</div>
<svg class="a" style="left:1017.50px;top:379.34px" width="15" height="12" viewBox="0 0 15 12" fill="none"><path d="M3.2 10.8 L3.6 8.6 C1.9 7.9 1 6.8 1 5.5 C1 3.2 3.7 1.4 7.2 1.4 C10.6 1.4 13.4 3.2 13.4 5.5 C13.4 7.8 10.6 9.6 7.2 9.6 C6.5 9.6 5.9 9.6 5.3 9.4 Z" stroke="#383838" stroke-width="1.05" stroke-linejoin="round"/></svg>
<div class="t" style="left:1037.00px;top:380.00px;font-size:11.2px;color:#383838;-webkit-text-stroke:0.12px #383838;">0</div>
<div class="a" style="left:1051.60px;top:384.44px;width:1.40px;height:1.40px;background:#525252;border-radius:1px;"></div>
<svg class="a" style="left:1061.30px;top:380.54px" width="13" height="11" viewBox="0 0 13 11" fill="none"><path d="M6.5 10 L1.9 5.6 A2.7 2.7 0 0 1 6.5 1.9 A2.7 2.7 0 0 1 11.1 5.6 Z" stroke="#383838" stroke-width="1.05" stroke-linejoin="round"/></svg>
<div class="a" style="left:42.00px;top:401.14px;width:1059.00px;height:1.00px;background:#ededed;border-radius:0px;"></div>
<div class="a" style="left:62.00px;top:411.83px;width:12.00px;height:12.00px;background:#fff;border-radius:3px;border:1px solid #b8b8b8;"></div>
<div class="t" style="left:81.90px;top:412.00px;font-size:11.6px;color:#383838;font-weight:bold;letter-spacing:0.526px;">Magic Needles</div>
<div class="a" style="left:249.00px;top:410.63px;width:65.80px;height:15.80px;background:#e4f5e9;border-radius:8px;"></div>
<div class="t" style="left:256.70px;top:413.00px;font-size:11px;color:#2b6d47;letter-spacing:0.530px;">Approved</div>
<div class="t" style="left:353.00px;top:413.00px;font-size:12.4px;color:#383838;letter-spacing:0.730px;">04-05-2022</div>
<div class="t" style="left:488.30px;top:412.00px;font-size:12px;color:#383838;letter-spacing:0.502px;">26,250.00</div>
<svg class="a" style="left:477.30px;top:412.43px" width="8" height="10" viewBox="0 0 8 10" fill="none"><path d="M0.6 1 H6.6 M0.6 3.6 H6.6 M2.4 1 Q5.4 1 5.4 3.2 Q5.4 5.4 0.9 5.6 L4.6 9.4" stroke="#383838" stroke-width="1.05" stroke-linejoin="round" stroke-linecap="round"/></svg>
<div class="a" style="left:560.10px;top:413.73px;width:89.90px;height:7.80px;background:#59ba8b;border-radius:4px;"></div>
<div class="a" style="left:663.10px;top:413.73px;width:90.30px;height:7.80px;background:#59ba8b;border-radius:4px;"></div>
<div class="t" style="left:767.30px;top:413.00px;font-size:12.2px;color:#383838;letter-spacing:-0.047px;">PUR-ORD-20…</div>
<svg class="a" style="left:984.50px;top:414.23px" width="4.5" height="8.0" viewBox="0 0 4.5 8.0" fill="none"><path d="M0.5 2.6 L2.8 0.9 H3.4 V7.50" stroke="#4a4a4a" stroke-width="1.25" stroke-linejoin="round"/></svg>
<div class="t" style="left:992.20px;top:414.00px;font-size:10px;color:#4a4a4a;-webkit-text-stroke:0.25px #4a4a4a;">y</div>
<svg class="a" style="left:1017.50px;top:412.03px" width="15" height="12" viewBox="0 0 15 12" fill="none"><path d="M3.2 10.8 L3.6 8.6 C1.9 7.9 1 6.8 1 5.5 C1 3.2 3.7 1.4 7.2 1.4 C10.6 1.4 13.4 3.2 13.4 5.5 C13.4 7.8 10.6 9.6 7.2 9.6 C6.5 9.6 5.9 9.6 5.3 9.4 Z" stroke="#383838" stroke-width="1.05" stroke-linejoin="round"/></svg>
<div class="t" style="left:1037.00px;top:413.00px;font-size:11.2px;color:#383838;-webkit-text-stroke:0.12px #383838;">0</div>
<div class="a" style="left:1051.60px;top:417.13px;width:1.40px;height:1.40px;background:#525252;border-radius:1px;"></div>
<svg class="a" style="left:1061.30px;top:413.23px" width="13" height="11" viewBox="0 0 13 11" fill="none"><path d="M6.5 10 L1.9 5.6 A2.7 2.7 0 0 1 6.5 1.9 A2.7 2.7 0 0 1 11.1 5.6 Z" stroke="#383838" stroke-width="1.05" stroke-linejoin="round"/></svg>
<div class="a" style="left:42.00px;top:433.83px;width:1059.00px;height:1.00px;background:#ededed;border-radius:0px;"></div>
<div class="a" style="left:62.00px;top:444.52px;width:12.00px;height:12.00px;background:#fff;border-radius:3px;border:1px solid #b8b8b8;"></div>
<div class="t" style="left:81.90px;top:444.00px;font-size:11.6px;color:#383838;font-weight:bold;letter-spacing:0.526px;">Magic Needles</div>
<div class="a" style="left:249.00px;top:443.32px;width:65.80px;height:15.80px;background:#e4f5e9;border-radius:8px;"></div>
<div class="t" style="left:256.70px;top:445.00px;font-size:11px;color:#2b6d47;letter-spacing:0.530px;">Approved</div>
<div class="t" style="left:353.00px;top:445.00px;font-size:12.4px;color:#383838;letter-spacing:0.586px;">01-08-2022</div>
<div class="t" style="left:486.80px;top:444.00px;font-size:12px;color:#383838;letter-spacing:0.689px;">45,000.00</div>
<svg class="a" style="left:475.80px;top:445.12px" width="8" height="10" viewBox="0 0 8 10" fill="none"><path d="M0.6 1 H6.6 M0.6 3.6 H6.6 M2.4 1 Q5.4 1 5.4 3.2 Q5.4 5.4 0.9 5.6 L4.6 9.4" stroke="#383838" stroke-width="1.05" stroke-linejoin="round" stroke-linecap="round"/></svg>
<div class="a" style="left:560.10px;top:446.42px;width:89.90px;height:7.80px;background:#59ba8b;border-radius:4px;"></div>
<div class="a" style="left:663.10px;top:446.42px;width:90.30px;height:7.80px;background:#59ba8b;border-radius:4px;"></div>
<div class="t" style="left:767.30px;top:445.00px;font-size:12.2px;color:#383838;letter-spacing:-0.047px;">PUR-ORD-20…</div>
<svg class="a" style="left:984.50px;top:446.92px" width="4.5" height="8.0" viewBox="0 0 4.5 8.0" fill="none"><path d="M0.5 2.6 L2.8 0.9 H3.4 V7.50" stroke="#4a4a4a" stroke-width="1.25" stroke-linejoin="round"/></svg>
<div class="t" style="left:992.20px;top:446.00px;font-size:10px;color:#4a4a4a;-webkit-text-stroke:0.25px #4a4a4a;">y</div>
<svg class="a" style="left:1017.50px;top:444.72px" width="15" height="12" viewBox="0 0 15 12" fill="none"><path d="M3.2 10.8 L3.6 8.6 C1.9 7.9 1 6.8 1 5.5 C1 3.2 3.7 1.4 7.2 1.4 C10.6 1.4 13.4 3.2 13.4 5.5 C13.4 7.8 10.6 9.6 7.2 9.6 C6.5 9.6 5.9 9.6 5.3 9.4 Z" stroke="#383838" stroke-width="1.05" stroke-linejoin="round"/></svg>
<div class="t" style="left:1037.00px;top:445.00px;font-size:11.2px;color:#383838;-webkit-text-stroke:0.12px #383838;">0</div>
<div class="a" style="left:1051.60px;top:449.82px;width:1.40px;height:1.40px;background:#525252;border-radius:1px;"></div>
<svg class="a" style="left:1061.30px;top:445.92px" width="13" height="11" viewBox="0 0 13 11" fill="none"><path d="M6.5 10 L1.9 5.6 A2.7 2.7 0 0 1 6.5 1.9 A2.7 2.7 0 0 1 11.1 5.6 Z" stroke="#383838" stroke-width="1.05" stroke-linejoin="round"/></svg>
<div class="a" style="left:42.00px;top:466.52px;width:1059.00px;height:1.00px;background:#ededed;border-radius:0px;"></div>
<div class="a" style="left:62.00px;top:477.21px;width:12.00px;height:12.00px;background:#fff;border-radius:3px;border:1px solid #b8b8b8;"></div>
<div class="t" style="left:81.90px;top:477.00px;font-size:11.6px;color:#383838;font-weight:bold;letter-spacing:0.526px;">Magic Needles</div>
<div class="a" style="left:249.00px;top:476.01px;width:65.80px;height:15.80px;background:#e4f5e9;border-radius:8px;"></div>
<div class="t" style="left:256.70px;top:478.00px;font-size:11px;color:#2b6d47;letter-spacing:0.530px;">Approved</div>
<div class="t" style="left:353.00px;top:478.00px;font-size:12.4px;color:#383838;letter-spacing:0.630px;">06-01-2023</div>
<div class="t" style="left:486.80px;top:477.00px;font-size:12px;color:#383838;letter-spacing:0.689px;">45,000.00</div>
<svg class="a" style="left:475.80px;top:477.81px" width="8" height="10" viewBox="0 0 8 10" fill="none"><path d="M0.6 1 H6.6 M0.6 3.6 H6.6 M2.4 1 Q5.4 1 5.4 3.2 Q5.4 5.4 0.9 5.6 L4.6 9.4" stroke="#383838" stroke-width="1.05" stroke-linejoin="round" stroke-linecap="round"/></svg>
<div class="a" style="left:560.10px;top:479.11px;width:89.90px;height:7.80px;background:#59ba8b;border-radius:4px;"></div>
<div class="a" style="left:663.10px;top:479.11px;width:90.30px;height:7.80px;background:#59ba8b;border-radius:4px;"></div>
<div class="t" style="left:767.30px;top:478.00px;font-size:12.2px;color:#383838;letter-spacing:-0.047px;">PUR-ORD-20…</div>
<div class="t" style="left:984.20px;top:479.00px;font-size:10px;color:#4a4a4a;-webkit-text-stroke:0.25px #4a4a4a;">2</div>
<div class="t" style="left:992.20px;top:479.00px;font-size:10px;color:#4a4a4a;-webkit-text-stroke:0.25px #4a4a4a;">y</div>
<svg class="a" style="left:1017.50px;top:477.41px" width="15" height="12" viewBox="0 0 15 12" fill="none"><path d="M3.2 10.8 L3.6 8.6 C1.9 7.9 1 6.8 1 5.5 C1 3.2 3.7 1.4 7.2 1.4 C10.6 1.4 13.4 3.2 13.4 5.5 C13.4 7.8 10.6 9.6 7.2 9.6 C6.5 9.6 5.9 9.6 5.3 9.4 Z" stroke="#383838" stroke-width="1.05" stroke-linejoin="round"/></svg>
<div class="t" style="left:1037.00px;top:478.00px;font-size:11.2px;color:#383838;-webkit-text-stroke:0.12px #383838;">0</div>
<div class="a" style="left:1051.60px;top:482.51px;width:1.40px;height:1.40px;background:#525252;border-radius:1px;"></div>
<svg class="a" style="left:1061.30px;top:478.61px" width="13" height="11" viewBox="0 0 13 11" fill="none"><path d="M6.5 10 L1.9 5.6 A2.7 2.7 0 0 1 6.5 1.9 A2.7 2.7 0 0 1 11.1 5.6 Z" stroke="#383838" stroke-width="1.05" stroke-linejoin="round"/></svg>
<div class="a" style="left:42.00px;top:499.21px;width:1059.00px;height:1.00px;background:#ededed;border-radius:0px;"></div>
<div class="a" style="left:62.00px;top:509.90px;width:12.00px;height:12.00px;background:#fff;border-radius:3px;border:1px solid #b8b8b8;"></div>
<div class="t" style="left:81.90px;top:510.00px;font-size:11.6px;color:#383838;font-weight:bold;letter-spacing:0.526px;">Magic Needles</div>
<div class="a" style="left:249.00px;top:508.70px;width:65.80px;height:15.80px;background:#e4f5e9;border-radius:8px;"></div>
<div class="t" style="left:256.70px;top:511.00px;font-size:11px;color:#2b6d47;letter-spacing:0.530px;">Approved</div>
<div class="t" style="left:353.00px;top:511.00px;font-size:12.4px;color:#383838;letter-spacing:0.630px;">03-01-2023</div>
<div class="t" style="left:487.70px;top:510.00px;font-size:12px;color:#383838;letter-spacing:0.577px;">26,250.00</div>
<svg class="a" style="left:476.70px;top:510.50px" width="8" height="10" viewBox="0 0 8 10" fill="none"><path d="M0.6 1 H6.6 M0.6 3.6 H6.6 M2.4 1 Q5.4 1 5.4 3.2 Q5.4 5.4 0.9 5.6 L4.6 9.4" stroke="#383838" stroke-width="1.05" stroke-linejoin="round" stroke-linecap="round"/></svg>
<div class="a" style="left:560.10px;top:511.80px;width:89.90px;height:7.80px;background:#59ba8b;border-radius:4px;"></div>
<div class="a" style="left:663.10px;top:511.80px;width:90.30px;height:7.80px;background:#59ba8b;border-radius:4px;"></div>
<div class="t" style="left:767.30px;top:511.00px;font-size:12.2px;color:#383838;letter-spacing:-0.047px;">PUR-ORD-20…</div>
<div class="t" style="left:984.20px;top:512.00px;font-size:10px;color:#4a4a4a;-webkit-text-stroke:0.25px #4a4a4a;">2</div>
<div class="t" style="left:992.20px;top:512.00px;font-size:10px;color:#4a4a4a;-webkit-text-stroke:0.25px #4a4a4a;">y</div>
<svg class="a" style="left:1017.50px;top:510.10px" width="15" height="12" viewBox="0 0 15 12" fill="none"><path d="M3.2 10.8 L3.6 8.6 C1.9 7.9 1 6.8 1 5.5 C1 3.2 3.7 1.4 7.2 1.4 C10.6 1.4 13.4 3.2 13.4 5.5 C13.4 7.8 10.6 9.6 7.2 9.6 C6.5 9.6 5.9 9.6 5.3 9.4 Z" stroke="#383838" stroke-width="1.05" stroke-linejoin="round"/></svg>
<div class="t" style="left:1037.00px;top:511.00px;font-size:11.2px;color:#383838;-webkit-text-stroke:0.12px #383838;">0</div>
<div class="a" style="left:1051.60px;top:515.20px;width:1.40px;height:1.40px;background:#525252;border-radius:1px;"></div>
<svg class="a" style="left:1061.30px;top:511.30px" width="13" height="11" viewBox="0 0 13 11" fill="none"><path d="M6.5 10 L1.9 5.6 A2.7 2.7 0 0 1 6.5 1.9 A2.7 2.7 0 0 1 11.1 5.6 Z" stroke="#383838" stroke-width="1.05" stroke-linejoin="round"/></svg>
<svg class="a" style="left:1116.00px;top:91.00px" width="9" height="6" viewBox="0 0 9 6" fill="none"><path d="M1.2 1.2 L4.3 4.3 L7.4 1.2" stroke="#383838" stroke-width="1" stroke-linecap="round" stroke-linejoin="round"/></svg>
<div class="t" style="left:1129.80px;top:89.00px;font-size:11px;color:#171717;font-weight:bold;letter-spacing:-0.039px;">Filter By</div>
<div class="a" style="left:1115.00px;top:114.00px;width:138.60px;height:19.60px;background:#f3f3f3;border-radius:6px;"></div>
<div class="t" style="left:1121.70px;top:119.00px;font-size:10px;color:#525252;letter-spacing:0.620px;">Assigned To</div>
<svg class="a" style="left:1239.00px;top:119.50px" width="6" height="9" viewBox="0 0 6 9" fill="none"><path d="M1.1 3 L3 1 L4.9 3 M1.1 6 L3 8 L4.9 6" stroke="#383838" stroke-width="1.05" stroke-linecap="round" stroke-linejoin="round"/></svg>
<div class="a" style="left:1115.00px;top:146.70px;width:138.60px;height:19.50px;background:#f3f3f3;border-radius:6px;"></div>
<div class="t" style="left:1121.70px;top:152.00px;font-size:10px;color:#525252;letter-spacing:0.509px;">Created By</div>
<svg class="a" style="left:1239.00px;top:152.00px" width="6" height="9" viewBox="0 0 6 9" fill="none"><path d="M1.1 3 L3 1 L4.9 3 M1.1 6 L3 8 L4.9 6" stroke="#383838" stroke-width="1.05" stroke-linecap="round" stroke-linejoin="round"/></svg>
<div class="t" style="left:1115.00px;top:178.00px;font-size:11px;color:#4a4a4a;letter-spacing:-0.059px;-webkit-text-stroke:0.25px #4a4a4a;">Edit Filters</div>
<div class="a" style="left:1102.00px;top:202.00px;width:158.00px;height:1.00px;background:#ededed;border-radius:0px;"></div>
<svg class="a" style="left:1117.00px;top:219.50px" width="6" height="8" viewBox="0 0 6 8" fill="none"><path d="M1 1 L4.2 4 L1 7" stroke="#383838" stroke-width="1" stroke-linecap="round" stroke-linejoin="round"/></svg>
<div class="t" style="left:1129.90px;top:218.00px;font-size:10.9px;color:#171717;font-weight:bold;letter-spacing:0.122px;">Tags</div>
<div class="a" style="left:1102.00px;top:243.00px;width:158.00px;height:1.00px;background:#ededed;border-radius:0px;"></div>
<svg class="a" style="left:1117.00px;top:259.50px" width="6" height="8" viewBox="0 0 6 8" fill="none"><path d="M1 1 L4.2 4 L1 7" stroke="#383838" stroke-width="1" stroke-linecap="round" stroke-linejoin="round"/></svg>
<div class="t" style="left:1129.90px;top:258.00px;font-size:10.9px;color:#171717;font-weight:bold;letter-spacing:0.121px;">Saved Filters</div>
<div class="a" style="left:210px;top:632px;width:870px;height:40px;border-radius:20px;background:#fff;box-shadow:0 0 28px 6px rgba(0,0,0,0.07)"></div>
</div></body></html>
